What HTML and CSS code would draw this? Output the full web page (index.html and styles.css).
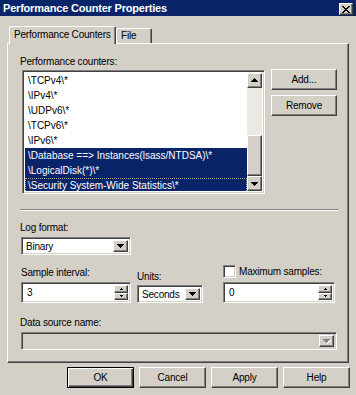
FILE: index.html
```html
<!DOCTYPE html>
<html lang="en">
<head>
    <meta charset="UTF-8">
    <title>Performance Counter Properties</title>
    <link rel="stylesheet" href="styles.css">
</head>
<body>
    <div class="titlebar">
        <span class="title">Performance Counter Properties</span>
        <span class="close raised">
            <svg width="8" height="7" viewBox="0 0 8 7"><path d="M0 0h2v1H0zM6 0h2v1H6zM1 1h2v1H1zM5 1h2v1H5zM2 2h4v1H2zM3 3h2v1H3zM2 4h4v1H2zM1 5h2v1H1zM5 5h2v1H5zM0 6h2v1H0zM6 6h2v1H6z"/></svg>
        </span>
    </div>

    <div class="tabs">
        <div class="tab active">Performance Counters</div>
        <div class="tab">File</div>
    </div>

    <div class="panel">
        <div class="label">Performance counters:</div>
        <div class="counters-row">
            <div class="listbox sunken">
                <ul class="items">
                    <li>\TCPv4\*</li>
                    <li>\IPv4\*</li>
                    <li>\UDPv6\*</li>
                    <li>\TCPv6\*</li>
                    <li>\IPv6\*</li>
                    <li class="sel">\Database ==&gt; Instances(lsass/NTDSA)\*</li>
                    <li class="sel">\LogicalDisk(*)\*</li>
                    <li class="sel focus">\Security System-Wide Statistics\*</li>
                </ul>
                <div class="scrollbar">
                    <div class="sb-btn raised">
                        <svg width="7" height="4" viewBox="0 0 7 4"><path d="M3 0h1v1H3zM2 1h3v1H2zM1 2h5v1H1zM0 3h7v1H0z"/></svg>
                    </div>
                    <div class="sb-track"></div>
                    <div class="sb-thumb raised"></div>
                    <div class="sb-btn raised">
                        <svg width="7" height="4" viewBox="0 0 7 4"><path d="M0 0h7v1H0zM1 1h5v1H1zM2 2h3v1H2zM3 3h1v1H3z"/></svg>
                    </div>
                </div>
            </div>
            <div class="side-buttons">
                <button class="raised">Add...</button>
                <button class="raised">Remove</button>
            </div>
        </div>

        <div class="separator"></div>

        <div class="label log-label">Log format:</div>
        <div class="combo sunken log-combo">
            <span class="combo-text">Binary</span>
            <span class="combo-btn raised">
                <svg width="7" height="4" viewBox="0 0 7 4"><path d="M0 0h7v1H0zM1 1h5v1H1zM2 2h3v1H2zM3 3h1v1H3z"/></svg>
            </span>
        </div>

        <div class="fields-row">
            <div class="group interval">
                <div class="label">Sample interval:</div>
                <div class="spin sunken">
                    <span class="spin-text">3</span>
                    <span class="spin-btns">
                        <span class="spin-btn raised"><svg width="3" height="2" viewBox="0 0 3 2"><path d="M1 0h1v1H1zM0 1h3v1H0z"/></svg></span>
                        <span class="spin-btn raised"><svg width="3" height="2" viewBox="0 0 3 2"><path d="M0 0h3v1H0zM1 1h1v1H1z"/></svg></span>
                    </span>
                </div>
            </div>
            <div class="group units">
                <div class="label">Units:</div>
                <div class="combo sunken">
                    <span class="combo-text">Seconds</span>
                    <span class="combo-btn raised">
                        <svg width="7" height="4" viewBox="0 0 7 4"><path d="M0 0h7v1H0zM1 1h5v1H1zM2 2h3v1H2zM3 3h1v1H3z"/></svg>
                    </span>
                </div>
            </div>
            <div class="group max">
                <label class="check-row">
                    <span class="checkbox sunken"></span>
                    <span>Maximum samples:</span>
                </label>
                <div class="spin sunken">
                    <span class="spin-text">0</span>
                    <span class="spin-btns">
                        <span class="spin-btn raised"><svg width="3" height="2" viewBox="0 0 3 2"><path d="M1 0h1v1H1zM0 1h3v1H0z"/></svg></span>
                        <span class="spin-btn raised"><svg width="3" height="2" viewBox="0 0 3 2"><path d="M0 0h3v1H0zM1 1h1v1H1z"/></svg></span>
                    </span>
                </div>
            </div>
        </div>

        <div class="label source-label">Data source name:</div>
        <div class="combo sunken disabled source-combo">
            <span class="combo-text"></span>
            <span class="combo-btn raised">
                <svg width="8" height="5" viewBox="0 0 8 5"><path fill="#fff" d="M1 1h7v1H1zM2 2h5v1H2zM3 3h3v1H3zM4 4h1v1H4z"/><path fill="#808080" d="M0 0h7v1H0zM1 1h5v1H1zM2 2h3v1H2zM3 3h1v1H3z"/></svg>
            </span>
        </div>
    </div>

    <div class="footer">
        <button class="raised default">OK</button>
        <button class="raised">Cancel</button>
        <button class="raised">Apply</button>
        <button class="raised">Help</button>
    </div>
</body>
</html>
```

FILE: styles.css
```css
* {
    box-sizing: border-box;
}
body {
    margin: 0;
    width: 356px;
    height: 395px;
    overflow: hidden;
    background-color: #d4d0c8;
    font-family: "Liberation Sans", Arial, sans-serif;
    font-size: 10px;
    letter-spacing: -0.2px;
    color: #000;
}

/* 3d borders */
.raised {
    background-color: #d4d0c8;
    border: 1px solid;
    border-color: #fff #404040 #404040 #fff;
    box-shadow: inset -1px -1px #808080, inset 1px 1px #d4d0c8;
}
.sunken {
    background-color: #fff;
    border: 1px solid;
    border-color: #808080 #fff #fff #808080;
    box-shadow: inset 1px 1px #404040, inset -1px -1px #d4d0c8;
}

/* title bar */
.titlebar {
    display: flex;
    justify-content: space-between;
    align-items: flex-start;
    height: 16px;
    padding: 0 3px;
    background-color: #0a246a;
}
.title {
    color: #fff;
    font-weight: bold;
    font-size: 11px;
    letter-spacing: -0.2px;
    line-height: 16px;
}
.close {
    display: flex;
    align-items: center;
    justify-content: center;
    width: 14px;
    height: 12px;
    margin-top: 3px;
}

/* tabs */
.tabs {
    display: flex;
    align-items: flex-end;
    height: 17px;
    margin: 10px 0 0 9px;
}
.tab {
    height: 15px;
    padding: 0 3px;
    line-height: 13px;
    white-space: nowrap;
    background-color: #d4d0c8;
    border: 1px solid;
    border-color: #fff #404040 transparent #fff;
    border-bottom: none;
    border-radius: 2px 2px 0 0;
    box-shadow: inset -1px 0 #808080;
}
.tab.active {
    position: relative;
    z-index: 1;
    width: 107px;
    height: 18px;
    margin-bottom: -1px;
    padding-left: 4px;
    line-height: 16px;
}
.tab:not(.active) {
    width: 36px;
    padding-left: 4px;
}

.panel {
    width: 342px;
    height: 320px;
    margin-left: 7px;
    padding: 11px 10px 0 12px;
    border: 1px solid;
    border-color: #fff #404040 #404040 #fff;
    box-shadow: inset -1px -1px #808080;
}
.label {
    height: 13px;
    line-height: 13px;
    white-space: nowrap;
}

/* counters list */
.counters-row {
    display: flex;
    align-items: flex-start;
    margin-top: 2px;
}
.listbox {
    display: flex;
    width: 243px;
    height: 124px;
    margin-left: 2px;
    padding: 2px;
}
.items {
    flex: 1;
    margin: 0;
    padding: 0;
    list-style: none;
    overflow: hidden;
}
.items li {
    height: 15px;
    padding-left: 3px;
    line-height: 15px;
    letter-spacing: 0;
    white-space: nowrap;
}
.items li.sel {
    background-color: #0a246a;
    color: #fff;
}
.items li.focus {
    outline: 1px dotted #b0a890;
    outline-offset: -1px;
}
.scrollbar {
    display: flex;
    flex-direction: column;
    width: 15px;
}
.sb-btn {
    display: flex;
    align-items: center;
    justify-content: center;
    height: 15px;
}
.sb-track {
    height: 48px;
    background-color: #ebe9e4;
}
.sb-thumb {
    height: 42px;
}
.side-buttons {
    display: flex;
    flex-direction: column;
    gap: 5px;
    margin: -1px 0 0 6px;
}

button {
    height: 21px;
    padding: 0;
    font-family: inherit;
    font-size: 10px;
    letter-spacing: -0.2px;
    color: #000;
}
.side-buttons button {
    width: 66px;
}

.separator {
    height: 2px;
    margin-top: 15px;
    border-top: 1px solid #808080;
    border-bottom: 1px solid #fff;
}
.log-label {
    margin-top: 10px;
}

/* combo boxes */
.combo {
    display: flex;
    align-items: stretch;
    height: 18px;
    padding: 2px;
    margin-left: 1px;
}
.combo-text {
    flex: 1;
    padding-left: 2px;
    line-height: 14px;
}
.combo-btn {
    display: flex;
    align-items: center;
    justify-content: center;
    width: 15px;
}
.log-combo {
    width: 110px;
    margin-top: 3px;
}

.fields-row {
    display: flex;
    margin-left: 1px;
}
.interval {
    width: 110px;
    padding-top: 11px;
}
.units {
    width: 66px;
    margin-left: 6px;
    padding-top: 15px;
}
.units .combo {
    margin: 2px 0 0;
}
.max {
    width: 112px;
    margin-left: 20px;
    padding-top: 10px;
}
.spin {
    display: flex;
    height: 21px;
    margin-top: 3px;
    padding: 2px;
}
.spin-text {
    flex: 1;
    padding-left: 3px;
    line-height: 16px;
}
.spin-btns {
    display: flex;
    flex-direction: column;
    width: 14px;
}
.spin-btn {
    display: flex;
    align-items: center;
    justify-content: center;
    flex: 1;
}
.check-row {
    display: flex;
    align-items: center;
    gap: 3px;
    height: 13px;
}
.checkbox {
    width: 13px;
    height: 13px;
}
.max .spin {
    margin-top: 4px;
}

.source-label {
    margin-top: 13px;
}
.source-combo {
    width: 316px;
    margin-top: 3px;
}
.combo.disabled {
    background-color: #d4d0c8;
}

.footer {
    display: flex;
    gap: 5px;
    margin-top: 4px;
    padding-left: 67px;
}
.footer button {
    width: 67px;
}
.footer .default {
    border: 1px solid #000;
    box-shadow: inset 1px 1px #fff, inset -1px -1px #404040, inset -2px -2px #808080;
}
```
